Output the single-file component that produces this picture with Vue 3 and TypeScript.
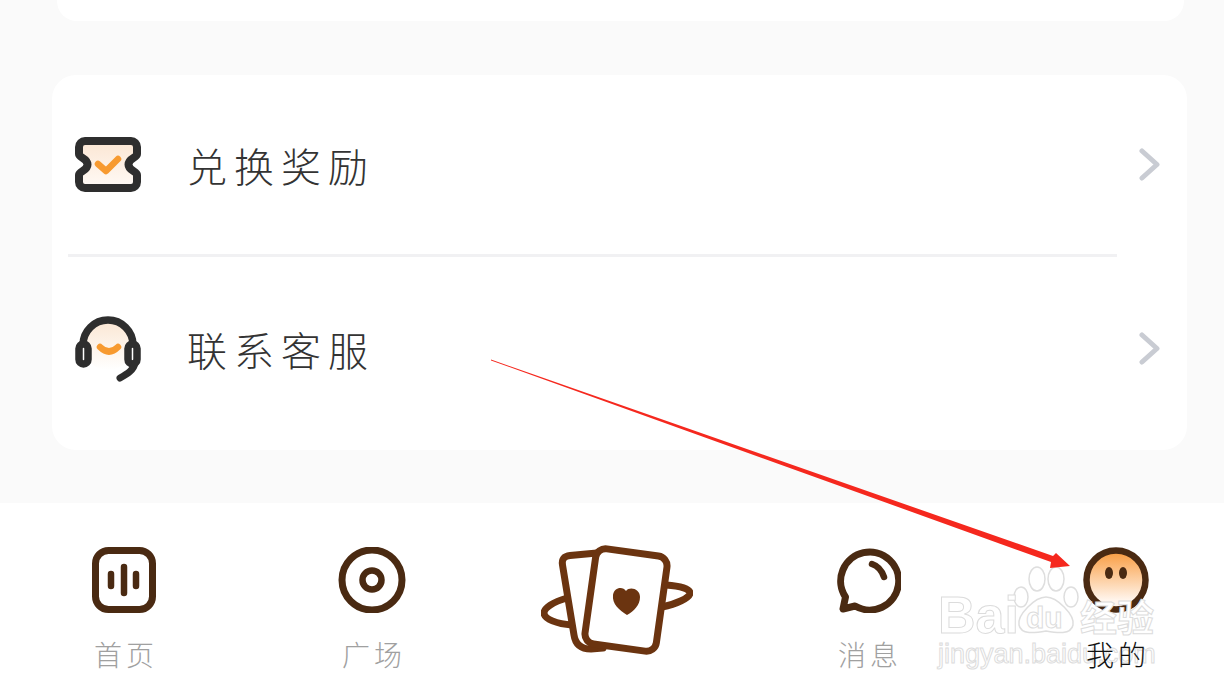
<script setup lang="ts">
type Row = { label: string; icon: string };
type Tab = { label: string; icon: string; active?: boolean };

const rows: Row[] = [
  { label: "兑换奖励", icon: "ticket" },
  { label: "联系客服", icon: "headset" },
];

const tabs: Tab[] = [
  { label: "首页", icon: "home" },
  { label: "广场", icon: "disc" },
  { label: "", icon: "cards" },
  { label: "消息", icon: "chat" },
  { label: "我的", icon: "me", active: true },
];
</script>

<template>
  <div class="page">
    <main class="content">
      <div class="card-stub"></div>
      <section class="card">
        <template v-for="(row, i) in rows" :key="row.label">
          <div v-if="i > 0" class="divider"></div>
          <div class="row">
            <svg v-if="row.icon === 'ticket'" class="row-icon" width="66" height="55" viewBox="0 0 66 55">
              <defs>
                <linearGradient id="tk" x1="0" y1="0" x2="0" y2="1">
                  <stop offset="0" stop-color="#fbe6d3" />
                  <stop offset="1" stop-color="#fffaf6" />
                </linearGradient>
              </defs>
              <path
                d="M10 4H56a6 6 0 0 1 6 6V17C62 21 53.5 21 53.5 27.5C53.5 34 62 34 62 38V45a6 6 0 0 1-6 6H10a6 6 0 0 1-6-6V38C4 34 12.5 34 12.5 27.5C12.5 21 4 21 4 17V10a6 6 0 0 1 6-6Z"
                fill="url(#tk)" stroke="#2e2e2e" stroke-width="8" stroke-linejoin="round"
              />
              <path d="M23 27L31 34L43 22" fill="none" stroke="#f79a30" stroke-width="6.5" stroke-linecap="round" stroke-linejoin="round" />
            </svg>
            <svg v-else class="row-icon" width="66" height="66" viewBox="0 0 66 66">
              <defs>
                <linearGradient id="hs" x1="0" y1="0" x2="0" y2="1">
                  <stop offset="0" stop-color="#fbe6d3" />
                  <stop offset="1" stop-color="#ffffff" />
                </linearGradient>
              </defs>
              <circle cx="33" cy="29" r="25" fill="url(#hs)" />
              <path d="M8 29A25 25 0 0 1 58 29" fill="none" stroke="#2e2e2e" stroke-width="7.5" />
              <rect x="4" y="28" width="9" height="20" rx="4.5" fill="#fff" stroke="#2e2e2e" stroke-width="7.5" />
              <rect x="53" y="28" width="9" height="20" rx="4.5" fill="#fff" stroke="#2e2e2e" stroke-width="7.5" />
              <path d="M60 47C59 54 52 58 45 62" fill="none" stroke="#2e2e2e" stroke-width="7" stroke-linecap="round" />
              <path d="M25 31Q34 40 43 31" fill="none" stroke="#f79a30" stroke-width="6.5" stroke-linecap="round" />
            </svg>
            <span class="row-label">{{ row.label }}</span>
            <svg class="chevron" width="21" height="33" viewBox="0 0 21 33">
              <path d="M3 3L18 16.5L3 30" fill="none" stroke="#c9ccd3" stroke-width="5" stroke-linecap="round" stroke-linejoin="round" />
            </svg>
          </div>
        </template>
      </section>
    </main>

    <nav class="tabbar">
      <div v-for="tab in tabs" :key="tab.icon" class="tab" :class="{ active: tab.active }">
        <div class="tab-icon">
          <svg v-if="tab.icon === 'home'" width="64" height="66" viewBox="0 0 64 66">
            <rect x="3.5" y="3.5" width="57" height="59" rx="13" fill="none" stroke="#4a2a12" stroke-width="7" />
            <path d="M19 27V39M32 20V46M44 27V39" stroke="#4a2a12" stroke-width="6.5" stroke-linecap="round" />
          </svg>
          <svg v-else-if="tab.icon === 'disc'" width="68" height="66" viewBox="0 0 68 66">
            <circle cx="34" cy="33" r="30" fill="none" stroke="#4a2a12" stroke-width="7" />
            <circle cx="34" cy="33" r="9.5" fill="none" stroke="#4a2a12" stroke-width="6.5" />
          </svg>
          <svg v-else-if="tab.icon === 'cards'" class="cards" width="152" height="110" viewBox="0 0 152 110">
            <path d="M26 53C12 57 3 63 3 68C3 74 16 79 31 80" fill="none" stroke="#6b3410" stroke-width="7" stroke-linecap="round" />
            <path d="M125 40C140 41 149 44 149 48C149 53 135 59 121 62" fill="none" stroke="#6b3410" stroke-width="7" stroke-linecap="round" />
            <path d="M56 8L29 10.5Q20 11.5 21.5 20L33 90Q35 104 50 104L62 103" fill="#fff" stroke="#6b3410" stroke-width="7" stroke-linecap="round" />
            <rect x="49" y="7" width="72" height="96" rx="10" transform="rotate(8 85 55)" fill="#fff" stroke="#6b3410" stroke-width="7" />
            <path d="M86 70C78 65 71 59 72 50C73 42 82 41 85 46C89 41 99 44 99 52C99 60 93 66 86 70Z" fill="#6b3410" />
          </svg>
          <svg v-else-if="tab.icon === 'chat'" class="chat" width="68" height="66" viewBox="0 0 68 66">
            <path d="M10 62L12.5 50A29 29 0 1 1 22 59Z" fill="none" stroke="#4a2a12" stroke-width="7" stroke-linejoin="round" />
            <path d="M39 17C45 19 49 24 51 30" fill="none" stroke="#4a2a12" stroke-width="6.5" stroke-linecap="round" />
          </svg>
          <svg v-else width="66" height="66" viewBox="0 0 66 66">
            <defs>
              <linearGradient id="me" x1="0" y1="0" x2="0" y2="1">
                <stop offset="0" stop-color="#f99a3c" />
                <stop offset="0.85" stop-color="#fff6ee" />
              </linearGradient>
            </defs>
            <circle cx="33" cy="33" r="29.5" fill="url(#me)" stroke="#4a2a12" stroke-width="6.5" />
            <ellipse cx="26" cy="26" rx="4" ry="6" fill="#4a2a12" />
            <ellipse cx="40" cy="26" rx="4" ry="6" fill="#4a2a12" />
          </svg>
        </div>
        <span class="tab-label">{{ tab.label }}</span>
      </div>
    </nav>

    <!-- watermark -->
    <div class="watermark">
      <svg class="paw" width="66" height="72" viewBox="0 0 66 72">
        <g fill="#fff" stroke="#dedede" stroke-width="1.5">
          <ellipse cx="8" cy="32" rx="7" ry="10" />
          <ellipse cx="24" cy="14" rx="8" ry="12" />
          <ellipse cx="43" cy="14" rx="8" ry="12" />
          <ellipse cx="58" cy="32" rx="7" ry="10" />
          <path d="M33 32C44 32 62 50 60 60C58 70 44 68 33 66C22 68 8 70 6 60C4 50 22 32 33 32Z" />
        </g>
      </svg>
      <span class="wm-bai">Bai</span>
      <span class="wm-du">du</span>
      <span class="wm-cn">经验</span>
      <span class="wm-url">jingyan.baidu.com</span>
    </div>

    <!-- red annotation arrow -->
    <svg class="arrow" width="1224" height="696" viewBox="0 0 1224 696">
      <polygon points="491,359.5 1053,556 1056,553 1070,566 1050,568 1051,562 491,360.5" fill="#f5281e" />
    </svg>
  </div>
</template>

<style>
html,
body {
  margin: 0;
  background: #fff;
}
</style>

<style scoped>
.page {
  position: relative;
  width: 1224px;
  height: 696px;
  overflow: hidden;
  display: flex;
  flex-direction: column;
  font-family: "Noto Sans CJK SC", "Liberation Sans", sans-serif;
  background: #fff;
}

.content {
  height: 503px;
  box-sizing: border-box;
  padding: 0 37px 0 52px;
  display: flex;
  flex-direction: column;
  gap: 54px;
  background: #fafafa;
}

.card-stub {
  height: 21px;
  margin: 0 3px 0 5px;
  border-radius: 0 0 20px 20px;
  background: #fff;
}

.card {
  height: 375px;
  box-sizing: border-box;
  padding: 0 27px 0 23px;
  border-radius: 24px;
  background: #fff;
}

.row {
  height: 179px;
  display: flex;
  align-items: center;
}

.divider + .row {
  height: 183px;
}

.row-icon {
  flex-shrink: 0;
}

.row-label {
  margin-left: 46px;
  font-size: 40px;
  font-weight: 300;
  letter-spacing: 7px;
  color: #333;
}

.chevron {
  margin-left: auto;
}

.divider {
  height: 3px;
  margin: 0 43px 0 -7px;
  background: #f1f1f3;
}

.tabbar {
  flex: 1;
  display: grid;
  grid-template-columns: repeat(5, 248px);
  background: #fff;
}

.tab {
  display: flex;
  flex-direction: column;
  align-items: center;
  padding-top: 42px;
}

.tab-icon {
  height: 70px;
  display: flex;
  align-items: flex-start;
  justify-content: center;
  padding-top: 2px;
  box-sizing: border-box;
}

.cards {
  flex-shrink: 0;
  margin-top: -2px;
  margin-left: -6px;
}

.chat {
  margin-left: -2px;
}

.tab-label {
  position: relative;
  z-index: 2;
  margin-top: 19px;
  padding-left: 4px;
  line-height: 40px;
  font-size: 28px;
  font-weight: 300;
  letter-spacing: 4px;
  color: #a0a0a0;
}

.tab.active .tab-label {
  color: #111;
}

.watermark {
  position: absolute;
  left: 938px;
  top: 565px;
  width: 222px;
  height: 105px;
  font-family: "Liberation Sans", sans-serif;
  color: #fff;
  -webkit-text-stroke: 1px #dcdcdc;
  pointer-events: none;
}

.paw {
  position: absolute;
  left: 75px;
  top: 0;
}

.wm-bai,
.wm-du,
.wm-cn,
.wm-url {
  position: absolute;
  white-space: nowrap;
}

.wm-bai {
  left: 0;
  top: 20px;
  font-size: 52px;
  font-weight: 700;
}

.wm-du {
  left: 88px;
  top: 36px;
  font-size: 30px;
  font-weight: 700;
}

.wm-cn {
  left: 142px;
  top: 24px;
  font-family: "Noto Sans CJK SC", sans-serif;
  font-size: 37px;
  font-weight: 700;
}

.wm-url {
  left: 0;
  top: 74px;
  font-size: 27px;
}

.arrow {
  position: absolute;
  left: 0;
  top: 0;
  pointer-events: none;
}
</style>
